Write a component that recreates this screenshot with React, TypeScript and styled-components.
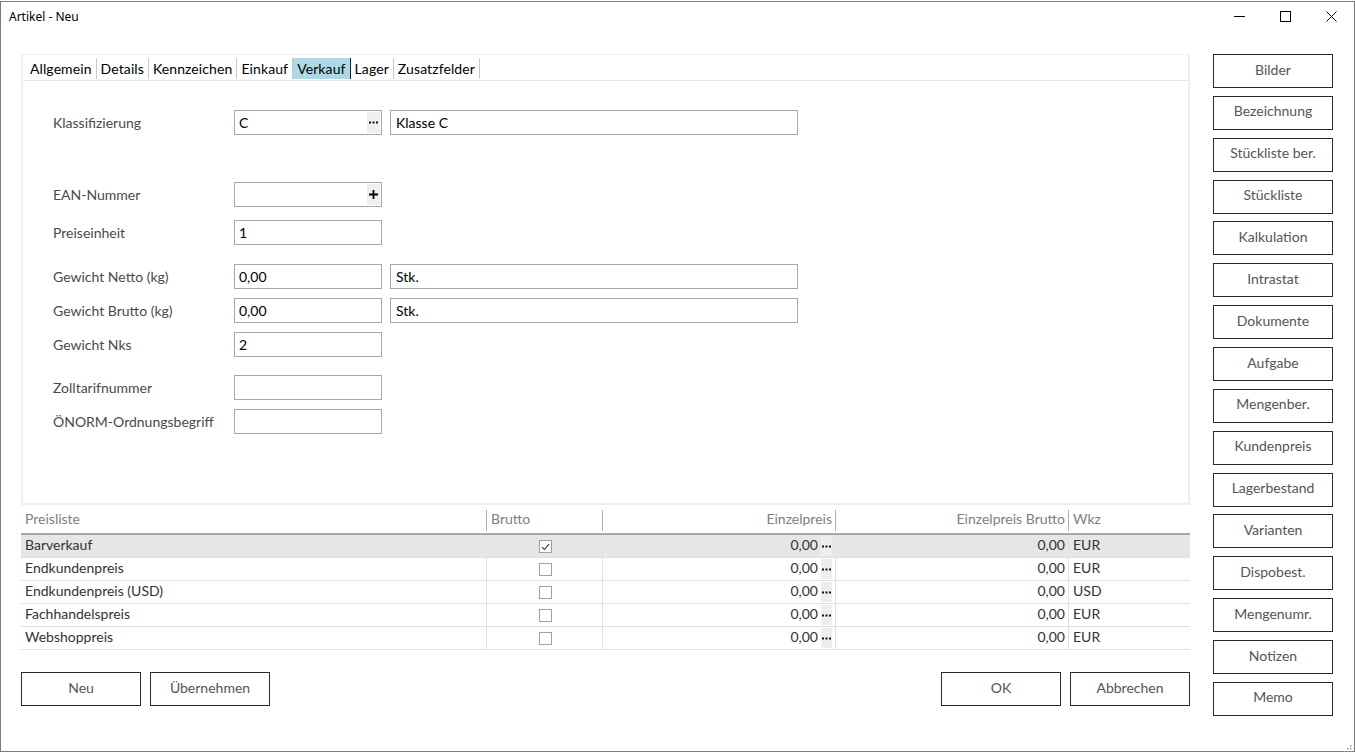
import styled, { createGlobalStyle } from 'styled-components';

const GlobalStyle = createGlobalStyle`
  html, body {
    margin: 0;
    padding: 0;
    background: #ffffff;
  }
  body {
    font-family: 'Lato', 'Noto Sans', sans-serif;
    font-size: 14px;
    color: #222;
  }
`;

const tabs = ['Allgemein', 'Details', 'Kennzeichen', 'Einkauf', 'Verkauf', 'Lager', 'Zusatzfelder'];

const sideButtons = [
  'Bilder', 'Bezeichnung', 'Stückliste ber.', 'Stückliste', 'Kalkulation', 'Intrastat', 'Dokumente',
  'Aufgabe', 'Mengenber.', 'Kundenpreis', 'Lagerbestand', 'Varianten', 'Dispobest.', 'Mengenumr.',
  'Notizen', 'Memo',
];

const prices = [
  { name: 'Barverkauf', checked: true, wkz: 'EUR' },
  { name: 'Endkundenpreis', checked: false, wkz: 'EUR' },
  { name: 'Endkundenpreis (USD)', checked: false, wkz: 'USD' },
  { name: 'Fachhandelspreis', checked: false, wkz: 'EUR' },
  { name: 'Webshoppreis', checked: false, wkz: 'EUR' },
];

const Dots = () => (
  <svg width="9" height="3" viewBox="0 0 9 3">
    <rect x="0" y="0.5" width="2" height="2" fill="#111" />
    <rect x="3.5" y="0.5" width="2" height="2" fill="#111" />
    <rect x="7" y="0.5" width="2" height="2" fill="#111" />
  </svg>
);

const App = () => {
  return (
    <Window>
      <GlobalStyle />
      <TitleBar>
        <Title>Artikel - Neu</Title>
        <WinControls>
          <WinButton>
            <svg width="11" height="11" viewBox="0 0 11 11">
              <line x1="0" y1="5.5" x2="11" y2="5.5" stroke="#000" strokeWidth="1" />
            </svg>
          </WinButton>
          <WinButton>
            <svg width="11" height="11" viewBox="0 0 11 11">
              <rect x="0.5" y="0.5" width="10" height="10" fill="none" stroke="#000" strokeWidth="1" />
            </svg>
          </WinButton>
          <WinButton>
            <svg width="11" height="11" viewBox="0 0 11 11">
              <path d="M0.5 0.5 L10.5 10.5 M10.5 0.5 L0.5 10.5" stroke="#000" strokeWidth="1" />
            </svg>
          </WinButton>
        </WinControls>
      </TitleBar>

      <Body>
        <MainColumn>
          <TabPanel>
            <TabBar>
              {tabs.map((t) => (
                <Tab key={t} $active={t === 'Verkauf'}>{t}</Tab>
              ))}
            </TabBar>
            <FormArea>
              <FormRow $top={29}>
                <Label>Klassifizierung</Label>
                <Field>
                  <FieldText>C</FieldText>
                  <FieldButton><Dots /></FieldButton>
                </Field>
                <WideField>Klasse C</WideField>
              </FormRow>
              <FormRow $top={47}>
                <Label>EAN-Nummer</Label>
                <Field>
                  <FieldText />
                  <FieldButton>
                    <svg width="9" height="9" viewBox="0 0 9 9">
                      <path d="M4.5 0 V9 M0 4.5 H9" stroke="#000" strokeWidth="1.8" />
                    </svg>
                  </FieldButton>
                </Field>
              </FormRow>
              <FormRow $top={13}>
                <Label>Preiseinheit</Label>
                <Field><FieldText>1</FieldText></Field>
              </FormRow>
              <FormRow $top={19}>
                <Label>Gewicht Netto (kg)</Label>
                <Field><FieldText>0,00</FieldText></Field>
                <WideField>Stk.</WideField>
              </FormRow>
              <FormRow $top={9}>
                <Label>Gewicht Brutto (kg)</Label>
                <Field><FieldText>0,00</FieldText></Field>
                <WideField>Stk.</WideField>
              </FormRow>
              <FormRow $top={9}>
                <Label>Gewicht Nks</Label>
                <Field><FieldText>2</FieldText></Field>
              </FormRow>
              <FormRow $top={18}>
                <Label>Zolltarifnummer</Label>
                <Field><FieldText /></Field>
              </FormRow>
              <FormRow $top={9}>
                <Label>ÖNORM-Ordnungsbegriff</Label>
                <Field><FieldText /></Field>
              </FormRow>
            </FormArea>
          </TabPanel>

          <Table>
            <HeaderRow>
              <HeadCell>Preisliste</HeadCell>
              <HeadCell>Brutto</HeadCell>
              <HeadCell $right>Einzelpreis</HeadCell>
              <HeadCell $right>Einzelpreis Brutto</HeadCell>
              <HeadCell $last>Wkz</HeadCell>
            </HeaderRow>
            {prices.map((p, i) => (
              <Row key={p.name} $selected={i === 0}>
                <Cell>{p.name}</Cell>
                <Cell $center>
                  <Check>{p.checked && (
                    <svg width="9" height="8" viewBox="0 0 9 8">
                      <path d="M1 4.2 L3.4 6.5 L8 1.2" fill="none" stroke="#333" strokeWidth="1.1" />
                    </svg>
                  )}</Check>
                </Cell>
                <Cell $right>
                  0,00
                  <DotsButton><Dots /></DotsButton>
                </Cell>
                <Cell $right>0,00</Cell>
                <Cell $last>{p.wkz}</Cell>
              </Row>
            ))}
          </Table>

          <ButtonBar>
            <ButtonGroup>
              <DialogButton>Neu</DialogButton>
              <DialogButton>Übernehmen</DialogButton>
            </ButtonGroup>
            <ButtonGroup>
              <DialogButton>OK</DialogButton>
              <DialogButton>Abbrechen</DialogButton>
            </ButtonGroup>
          </ButtonBar>
        </MainColumn>

        <Sidebar>
          {sideButtons.map((b) => (
            <SideButton key={b}>{b}</SideButton>
          ))}
        </Sidebar>
      </Body>

      <Grip>
        <svg width="10" height="10" viewBox="0 0 10 10">
          {[[8, 2], [5, 5], [8, 5], [2, 8], [5, 8], [8, 8]].map(([x, y]) => (
            <rect key={`${x}-${y}`} x={x} y={y} width="1.5" height="1.5" fill="#999" />
          ))}
        </svg>
      </Grip>
    </Window>
  );
};

export default App;

const Window = styled.div`
  position: relative;
  box-sizing: border-box;
  width: 1355px;
  height: 751px;
  margin-top: 1px;
  border: 1px solid #7a7a7a;
  background: #fff;
  display: flex;
  flex-direction: column;
`;

const TitleBar = styled.div`
  height: 29px;
  display: flex;
  align-items: center;
  justify-content: space-between;
  padding-left: 8px;
`;

const Title = styled.div`
  font-family: 'Noto Sans', sans-serif;
  font-size: 12px;
  color: #000;
`;

const WinControls = styled.div`
  display: flex;
  height: 100%;
`;

const WinButton = styled.div`
  width: 46px;
  height: 100%;
  display: flex;
  align-items: center;
  justify-content: center;
`;

const Body = styled.div`
  display: flex;
  padding: 23px 0 0 20px;
  gap: 23px;
`;

const MainColumn = styled.div`
  width: 1169px;
  display: flex;
  flex-direction: column;
`;

const TabPanel = styled.div`
  height: 451px;
  box-sizing: border-box;
  border: 2px solid #efefef;
  border-top-width: 1px;
`;

const TabBar = styled.div`
  display: flex;
  height: 26px;
  padding: 3px 0 0 3px;
  box-sizing: border-box;
  border-bottom: 1px solid #e8e8e8;
`;

const Tab = styled.div<{ $active?: boolean }>`
  display: flex;
  align-items: center;
  height: 21px;
  padding: 0 4px 1px 4px;
  box-sizing: border-box;
  border-right: 1px solid ${(p) => (p.$active ? '#222' : '#c8c8c8')};
  background: ${(p) => (p.$active ? '#add8e6' : 'transparent')};
  color: #000;
  font-size: 14px;
  letter-spacing: 0.1px;
`;

const FormArea = styled.div`
  padding-left: 30px;
  display: flex;
  flex-direction: column;
`;

const FormRow = styled.div<{ $top: number }>`
  display: flex;
  align-items: center;
  height: 25px;
  margin-top: ${(p) => p.$top}px;
`;

const Label = styled.div`
  width: 181px;
  color: #4a4a4a;
  font-size: 14px;
  padding-bottom: 1px;
`;

const Field = styled.div`
  box-sizing: border-box;
  width: 148px;
  height: 25px;
  border: 1px solid #a6a6a6;
  display: flex;
  align-items: center;
  padding: 1px 1px 1px 4px;
`;

const FieldText = styled.div`
  flex: 1;
  color: #000;
  padding-bottom: 1px;
`;

const FieldButton = styled.div`
  width: 13px;
  height: 21px;
  background: #efefef;
  display: flex;
  align-items: center;
  justify-content: center;
`;

const WideField = styled.div`
  box-sizing: border-box;
  width: 408px;
  height: 25px;
  margin-left: 8px;
  border: 1px solid #a6a6a6;
  padding: 0 0 1px 5px;
  display: flex;
  align-items: center;
  color: #000;
`;

const Table = styled.div`
  margin-top: 3px;
  display: flex;
  flex-direction: column;
`;

const columns = '466px 116px 233px 233px 1fr';

const HeaderRow = styled.div`
  display: grid;
  grid-template-columns: ${columns};
  box-sizing: border-box;
  height: 27px;
  border-bottom: 2px solid #a8a8a8;
  padding-top: 2px;
`;

const HeadCell = styled.div<{ $right?: boolean; $last?: boolean }>`
  display: flex;
  align-items: flex-start;
  justify-content: ${(p) => (p.$right ? 'flex-end' : 'flex-start')};
  padding: 0 3px 0 4px;
  box-sizing: border-box;
  line-height: 18px;
  color: #808080;
  border-right: ${(p) => (p.$last ? 'none' : '1px solid #b0b0b0')};
  height: 21px;
`;

const Row = styled.div<{ $selected?: boolean }>`
  display: grid;
  grid-template-columns: ${columns};
  height: 22px;
  border-bottom: 1px solid #e0e0e0;
  background: ${(p) => (p.$selected ? '#e6e6e6' : 'transparent')};
`;

const Cell = styled.div<{ $right?: boolean; $center?: boolean; $last?: boolean }>`
  display: flex;
  align-items: flex-start;
  justify-content: ${(p) => (p.$right ? 'flex-end' : p.$center ? 'center' : 'flex-start')};
  box-sizing: border-box;
  height: 22px;
  padding: 0 3px 0 4px;
  line-height: 19px;
  border-right: ${(p) => (p.$last ? 'none' : '1px solid #e2e2e2')};
  color: #333;
`;

const Check = styled.div`
  box-sizing: border-box;
  width: 13px;
  height: 13px;
  margin-top: 5px;
  border: 1px solid #a0a0a0;
  background: #fff;
  display: flex;
  align-items: center;
  justify-content: center;
`;

const DotsButton = styled.div`
  width: 11px;
  height: 20px;
  margin: 1px 0 0 3px;
  background: #eeeeee;
  display: flex;
  align-items: center;
  justify-content: center;
`;

const ButtonBar = styled.div`
  display: flex;
  justify-content: space-between;
  margin-top: 22px;
`;

const ButtonGroup = styled.div`
  display: flex;
  gap: 9px;
`;

const DialogButton = styled.div`
  box-sizing: border-box;
  width: 120px;
  height: 34px;
  padding-bottom: 4px;
  border: 1px solid #2b2b2b;
  display: flex;
  align-items: center;
  justify-content: center;
  color: #555;
  font-size: 14px;
`;

const Sidebar = styled.div`
  display: flex;
  flex-direction: column;
  gap: 7.87px;
`;

const SideButton = styled(DialogButton)``;

const Grip = styled.div`
  position: absolute;
  right: 2px;
  bottom: 2px;
  width: 10px;
  height: 10px;
`;
